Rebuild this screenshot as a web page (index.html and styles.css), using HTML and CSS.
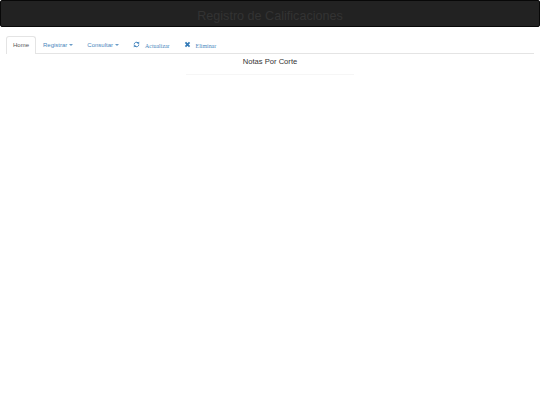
FILE: index.html
```html
<!DOCTYPE html>
<html lang="es">
<head>
<meta charset="utf-8">
<title>Registro de Calificaciones</title>
<link rel="stylesheet" href="styles.css">
</head>
<body>
<header class="navbar"><h1 class="brand">Registro de Calificaciones</h1></header>
<nav class="tabs">
  <a class="tab active">Home</a>
  <a class="tab">Registrar <span class="caret"></span></a>
  <a class="tab">Consultar <span class="caret"></span></a>
  <a class="tab action">
    <svg class="icon" viewBox="0 0 12 12"><path d="M2 6a4 4 0 0 1 6.800-2.800M10 6a4 4 0 0 1-6.800 2.800" fill="none" stroke="#337ab7" stroke-width="1.600"/><path d="M10.600 1v3.600H7zM1.400 11V7.400H5z" fill="#337ab7"/></svg>
    <span class="serif">Actualizar</span>
  </a>
  <a class="tab action">
    <svg class="icon" viewBox="0 0 12 12"><path d="M2.500 2.500l7 7M9.500 2.500l-7 7" fill="none" stroke="#337ab7" stroke-width="3"/></svg>
    <span class="serif">Eliminar</span>
  </a>
</nav>
<main class="content">
  <h2 class="title">Notas Por Corte</h2>
  <div class="rule"></div>
</main>
</body>
</html>
```
FILE: styles.css
```css
* { box-sizing: border-box; }
html, body { margin: 0; padding: 0; background: #fff; }
body { font-family: "Liberation Sans", Arial, sans-serif; color: #333; }
.navbar {
  height: 27px;
  padding-top: 5px;
  background: #222;
  border: 1px solid #080808;
  border-radius: 2px;
  display: flex;
  align-items: center;
  justify-content: center;
}
.brand { margin: 0; font-size: 12.600px; font-weight: 400; color: #333; }
.tabs {
  margin: 9px 6px 0;
  height: 18px;
  display: flex;
  border-bottom: 1px solid #e4e4e4;
  font-size: 6px;
}
.tab {
  height: 17px;
  padding: 0 6px 1px;
  display: flex;
  align-items: center;
  gap: 2px;
  color: #4a87bd;
  border: 1px solid transparent;
  border-bottom: 0;
  white-space: nowrap;
}
.tab.active {
  color: #555;
  height: 18px;
  background: #fff;
  border-color: #e4e4e4;
  border-radius: 3px 3px 0 0;
}
.caret {
  width: 0;
  height: 0;
  border-top: 2px solid #6a9cc8;
  border-left: 2px solid transparent;
  border-right: 2px solid transparent;
}
.action { gap: 5px; }
.icon { width: 7px; height: 7px; }
.serif { font-family: "Liberation Serif", serif; font-size: 5.900px; padding-top: 2px; }
.content { display: flex; flex-direction: column; align-items: center; }
.title { margin: 2px 0 0; font-size: 7.600px; line-height: 11px; font-weight: 400; color: #333; }
.rule { width: 168px; margin: 7px 0 0 -1px; border-top: 1px solid #f6f6f6; }
```
